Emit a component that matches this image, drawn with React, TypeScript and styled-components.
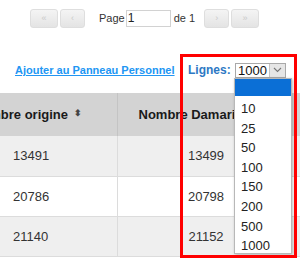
import React from 'react';
import styled, { createGlobalStyle } from 'styled-components';

const GlobalStyle = createGlobalStyle`
  html, body {
    margin: 0;
    padding: 0;
    background: #fff;
    font-family: 'Liberation Sans', Arial, sans-serif;
  }
`;

const rows = [
  { origine: '13491', damaris: '13499' },
  { origine: '20786', damaris: '20798' },
  { origine: '21140', damaris: '21152' },
];

const options = ['10', '25', '50', '100', '150', '200', '500', '1000'];

const App = () => {
  return (
    <Page>
      <GlobalStyle />
      <Pager>
        <PageButton $width={28}>«</PageButton>
        <PageButton $width={25}>‹</PageButton>
        <PageLabel $gap={12}>Page</PageLabel>
        <PageInput defaultValue="1" />
        <PageLabel $gap={3}>de 1</PageLabel>
        <PageButton $width={25} $gap={8}>›</PageButton>
        <PageButton $width={28}>»</PageButton>
      </Pager>

      <Toolbar>
        <AddLink href="#">Ajouter au Panneau Personnel</AddLink>
        <LinesLabel>Lignes:</LinesLabel>
        <Select>
          <SelectValue>1000</SelectValue>
          <SelectArrow>
            <svg width="9" height="6" viewBox="0 0 9 6">
              <path d="M1 1 L4.5 4.5 L8 1" fill="none" stroke="#777" strokeWidth="1.1" />
            </svg>
          </SelectArrow>
        </Select>
      </Toolbar>

      <TableWrap>
        <Table>
          <thead>
            <tr>
              <HeadCell $width={180}>
                Nombre origine <SortIcon>⬍</SortIcon>
              </HeadCell>
              <HeadCell $width={178} $left>
                Nombre Damaris <SortIcon>⬍</SortIcon>
              </HeadCell>
              <HeadCell $width={120}>Total</HeadCell>
            </tr>
          </thead>
          <tbody>
            {rows.map((row, i) => (
              <Row key={row.origine} $odd={i % 2 === 0}>
                <Cell>{row.origine}</Cell>
                <Cell $center>{row.damaris}</Cell>
                <Cell />
              </Row>
            ))}
          </tbody>
        </Table>
      </TableWrap>

      <Dropdown>
        <Option $selected />
        {options.map((o) => (
          <Option key={o}>{o}</Option>
        ))}
      </Dropdown>

      <Highlight />
    </Page>
  );
};

export default App;

const Page = styled.div`
  position: relative;
  width: 300px;
  height: 264px;
  overflow: hidden;
`;

const Pager = styled.div`
  display: flex;
  align-items: center;
  padding: 8px 0 0 30px;
  height: 20px;
`;

const PageButton = styled.div<{ $width: number; $gap?: number }>`
  box-sizing: border-box;
  width: ${(p) => p.$width}px;
  height: 19px;
  margin-right: 2px;
  margin-left: ${(p) => p.$gap || 0}px;
  border: 1px solid #dedede;
  border-radius: 3px;
  background: linear-gradient(#f4f4f4, #e4e4e4);
  color: #cacaca;
  font-size: 9px;
  display: flex;
  align-items: center;
  justify-content: center;
`;

const PageLabel = styled.span<{ $gap: number }>`
  font-size: 11px;
  color: #333;
  margin-left: ${(p) => p.$gap}px;
  margin-right: 1px;
`;

const PageInput = styled.input`
  box-sizing: border-box;
  width: 45px;
  height: 17px;
  margin: 0;
  padding: 0 1px;
  border: 1px solid #d2d2d2;
  font-family: 'Liberation Sans', Arial, sans-serif;
  font-size: 12px;
  color: #222;
  outline: none;
`;

const Toolbar = styled.div`
  display: flex;
  align-items: center;
  height: 16px;
  margin-top: 34px;
  padding-left: 15px;
`;

const AddLink = styled.a`
  font-size: 11px;
  font-weight: bold;
  color: #2196f3;
  text-decoration: underline;
  width: 173px;
  white-space: nowrap;
`;

const LinesLabel = styled.span`
  font-size: 12px;
  font-weight: bold;
  color: #2d78c4;
  width: 47px;
`;

const Select = styled.div`
  display: flex;
  box-sizing: border-box;
  height: 15px;
  width: 51px;
  border: 1px solid #a9a9a9;
  background: #fff;
`;

const SelectValue = styled.span`
  flex: 1;
  font-size: 13px;
  line-height: 13px;
  color: #111;
  padding-left: 2px;
`;

const SelectArrow = styled.span`
  width: 15px;
  background: #e6e6e6;
  border-left: 1px solid #c4c4c4;
  display: flex;
  align-items: center;
  justify-content: center;
`;

const TableWrap = styled.div`
  margin-top: 15px;
  overflow: hidden;
`;

const Table = styled.table`
  border-collapse: collapse;
  table-layout: fixed;
  margin-left: -63px;
  width: 478px;
`;

const HeadCell = styled.th<{ $width: number; $left?: boolean }>`
  width: ${(p) => p.$width}px;
  height: 43px;
  padding: 0;
  padding-left: ${(p) => (p.$left ? '21px' : '0')};
  background: #d3d3d3;
  border-right: 1px solid #c4c4c4;
  font-size: 13px;
  font-weight: bold;
  color: #1a1a1a;
  text-align: ${(p) => (p.$left ? 'left' : 'center')};
  white-space: nowrap;
  box-sizing: border-box;
`;

const SortIcon = styled.span`
  font-size: 9px;
  color: #444;
  vertical-align: 3px;
  margin-left: 2px;
`;

const Row = styled.tr<{ $odd: boolean }>`
  background: ${(p) => (p.$odd ? '#efefef' : '#fff')};
  border-bottom: 1px solid #dcdcdc;
`;

const Cell = styled.td<{ $center?: boolean }>`
  height: 40px;
  padding: 0 0 0 ${(p) => (p.$center ? '0' : '76px')};
  text-align: ${(p) => (p.$center ? 'center' : 'left')};
  font-size: 13px;
  color: #333;
  border-right: 1px solid #dcdcdc;
  box-sizing: border-box;
`;

const Dropdown = styled.div`
  position: absolute;
  left: 234px;
  top: 78px;
  width: 58px;
  height: 176px;
  box-sizing: border-box;
  background: #fff;
  border: 1px solid #b8b8b8;
  box-shadow: 1px 1px 3px rgba(0, 0, 0, 0.25);
`;

const Option = styled.div<{ $selected?: boolean }>`
  height: ${(p) => (p.$selected ? '17px' : '19.6px')};
  margin-bottom: ${(p) => (p.$selected ? '3px' : '0')};
  background: ${(p) => (p.$selected ? '#0b6fd6' : 'transparent')};
  font-size: 13px;
  line-height: 19.6px;
  color: #222;
  padding-left: 6px;
`;

const Highlight = styled.div`
  position: absolute;
  left: 180px;
  top: 54px;
  width: 117px;
  height: 204px;
  box-sizing: border-box;
  border: 3px solid #ff0000;
`;
